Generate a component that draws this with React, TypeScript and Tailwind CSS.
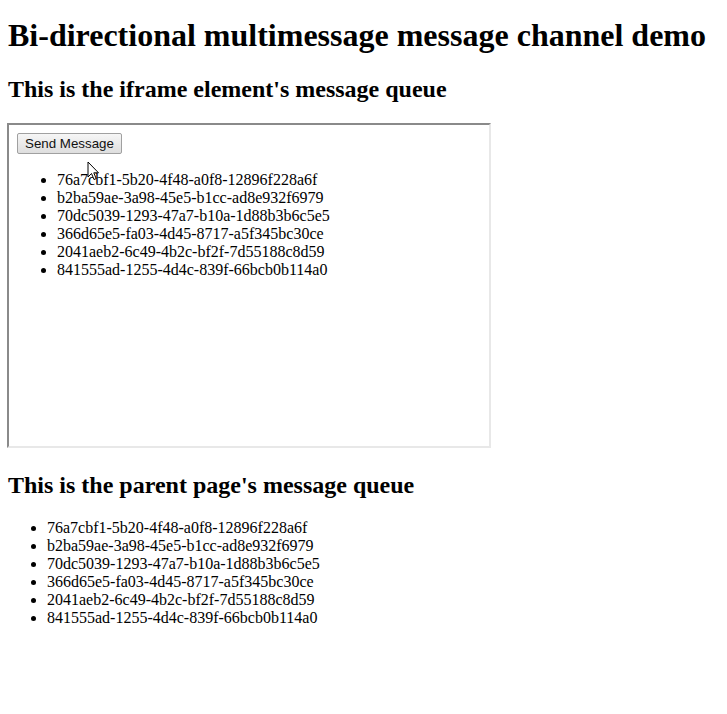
const ids = [
  "76a7cbf1-5b20-4f48-a0f8-12896f228a6f",
  "b2ba59ae-3a98-45e5-b1cc-ad8e932f6979",
  "70dc5039-1293-47a7-b10a-1d88b3b6c5e5",
  "366d65e5-fa03-4d45-8717-a5f345bc30ce",
  "2041aeb2-6c49-4b2c-bf2f-7d55188c8d59",
  "841555ad-1255-4d4c-839f-66bcb0b114a0",
];

function MessageList({ top = "mt-4" }: { top?: string }) {
  return (
    <ul className={`${top} mb-4 list-disc pl-10`}>
      {ids.map((id) => (
        <li key={id} className="leading-[18px]">
          {id}
        </li>
      ))}
    </ul>
  );
}

export default function App() {
  return (
    <div className="relative min-h-screen bg-white px-2 text-[16px] text-black [font-family:'Liberation_Serif',serif]">
      <div className="h-px" />
      <h1 className="mt-[16.44px] mb-[20.44px] text-[32px] font-bold leading-[37px]">
        Bi-directional multimessage message channel demo
      </h1>
      <h2 className="my-[19.92px] text-[24px] font-bold leading-[28px]">
        This is the iframe element's message queue
      </h2>

      <div className="-ml-px h-[325px] w-[484px] border-2 border-t-[#8a8a8a] border-l-[#8a8a8a] border-r-[#e8e8e8] border-b-[#e8e8e8]">
        <div className="p-2">
          <button
            type="button"
            className="block h-[21px] rounded-[2px] border border-[#a0a0a0] bg-gradient-to-b from-[#f6f6f6] to-[#dedede] px-[7px] text-[13.33px] leading-none text-[#111] [font-family:'Liberation_Sans',sans-serif]"
          >
            Send Message
          </button>
          <MessageList top="mt-[17px]" />
        </div>
      </div>

      <h2 className="mt-[22.92px] mb-[19.92px] text-[24px] font-bold leading-[28px]">
        This is the parent page's message queue
      </h2>
      <div className="-ml-px">
        <MessageList />
      </div>

      <svg
        className="absolute left-[87px] top-[161px]"
        width="13"
        height="20"
        viewBox="0 0 13 20"
      >
        <path
          d="M1 1 L1 16 L4.5 12.5 L7 18.5 L9.2 17.6 L6.8 11.8 L11.5 11.8 Z"
          fill="white"
          stroke="black"
          strokeWidth="1"
          strokeLinejoin="round"
        />
      </svg>
    </div>
  );
}
